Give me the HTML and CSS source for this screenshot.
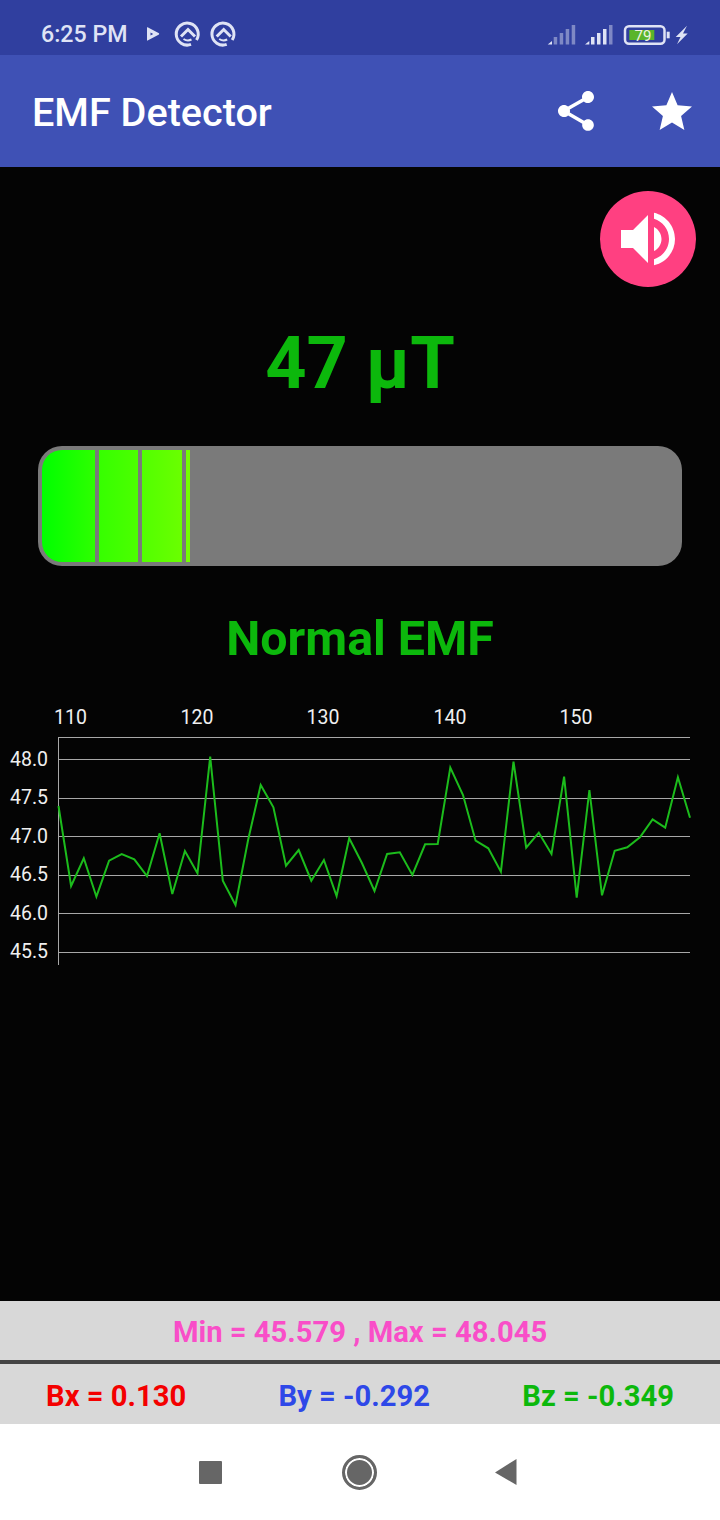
FILE: index.html
```html
<!DOCTYPE html>
<html lang="en">
<head>
  <meta charset="UTF-8">
  <title>EMF Detector</title>
  <meta name="viewport" content="width=device-width, initial-scale=1">
  <link rel="stylesheet" href="styles.css">
</head>
<body>
  <div class="phone">
    <div class="status-bar">
      <span class="time">6:25 PM</span>
      <svg class="status-left" width="100" height="30" viewBox="0 0 100 30">
        <path d="M7 8.5 Q7 8 7.6 8.2 L19 14.2 Q19.4 15 19 15.4 L7.6 21.6 Q7 21.8 7 21 Z M10.5 13.5 L10.5 16.5 L13.2 15 Z" fill="#dfe3f5" fill-rule="evenodd"/>
        <g fill="none" stroke="#dfe3f5" stroke-width="3">
          <path d="M51 25.4 A11 11 0 1 1 56.5 21"/>
          <path d="M41 17.5 L48 10.5 L55 17.5"/>
          <path d="M43.5 20 Q47.5 22.5 51.5 20.5" stroke-width="2"/>
          <path d="M86.7 25.4 A11 11 0 1 1 92.2 21"/>
          <path d="M76.7 17.5 L83.7 10.5 L90.7 17.5"/>
          <path d="M79.2 20 Q83.2 22.5 87.2 20.5" stroke-width="2"/>
        </g>
      </svg>
      <svg class="status-right" width="142" height="30" viewBox="0 0 142 30">
        <g fill="#dfe3f5">
          <path d="M1.7 25.5 L6 22 V25.5 Z"/>
          <g opacity="0.45">
            <rect x="7.7" y="18" width="3.5" height="7.5"/>
            <rect x="13.7" y="14" width="3.5" height="11.5"/>
            <rect x="19.7" y="10" width="3.5" height="15.5"/>
            <rect x="25.7" y="6" width="3.5" height="19.5"/>
          </g>
          <path d="M39 25.5 L43.3 22 V25.5 Z"/>
          <rect x="45" y="18" width="3.5" height="7.5"/>
          <rect x="51" y="14" width="3.5" height="11.5"/>
          <rect x="57" y="10" width="3.5" height="15.5"/>
          <rect x="63" y="6" width="3.5" height="19.5" opacity="0.45"/>
        </g>
        <rect x="83.3" y="11" width="25" height="10" fill="#5ab52a"/>
        <rect x="79" y="7.2" width="39.5" height="17.6" rx="4" fill="none" stroke="#dfe3f5" stroke-width="2.5"/>
        <rect x="120.7" y="12.7" width="3" height="6.6" fill="#dfe3f5"/>
        <text x="97" y="21.5" class="battery-level">79</text>
        <path d="M141 6.7 L129.7 18 H134.5 L131 25.3 L141.7 14.5 H137 Z" fill="#dfe3f5"/>
      </svg>
    </div>

    <header class="toolbar">
      <h1 class="toolbar-title">EMF Detector</h1>
      <svg class="toolbar-icon" viewBox="0 0 24 24"><path d="M18 16.08c-.76 0-1.44.3-1.96.77L8.91 12.7c.05-.23.09-.46.09-.7s-.04-.47-.09-.7l7.05-4.11c.54.5 1.25.81 2.04.81 1.66 0 3-1.34 3-3s-1.34-3-3-3-3 1.34-3 3c0 .24.04.47.09.7L8.04 9.81C7.5 9.31 6.79 9 6 9c-1.66 0-3 1.34-3 3s1.34 3 3 3c.79 0 1.5-.31 2.04-.81l7.12 4.16c-.05.21-.08.43-.08.65 0 1.61 1.31 2.92 2.92 2.92s2.92-1.31 2.92-2.92-1.31-2.92-2.92-2.92z"/></svg>
      <svg class="toolbar-icon star" viewBox="0 0 24 24"><path d="M12 17.27L18.18 21l-1.64-7.03L22 9.24l-7.19-.61L12 2 9.19 8.63 2 9.24l5.46 4.73L5.82 21z"/></svg>
    </header>

    <main class="content">
      <div class="fab-row">
        <button class="fab">
          <svg viewBox="0 0 24 24"><path d="M3 9v6h4l5 5V4L7 9H3zm13.5 3c0-1.77-1.02-3.29-2.5-4.03v8.05c1.48-.73 2.5-2.25 2.5-4.02zM14 3.23v2.06c2.89.86 5 3.54 5 6.71s-2.11 5.85-5 6.71v2.06c4.01-.91 7-4.49 7-8.77s-2.99-7.86-7-8.77z"/></svg>
        </button>
      </div>

      <div class="reading">47 µT</div>

      <div class="meter">
        <div class="seg seg-1"></div>
        <div class="seg seg-2"></div>
        <div class="seg seg-3"></div>
        <div class="seg seg-4"></div>
      </div>

      <div class="level">Normal EMF</div>

      <svg class="chart" width="720" height="270" viewBox="0 700 720 270">
        <g class="grid">
          <line x1="58" y1="737.5" x2="690" y2="737.5"/>
          <line x1="58" y1="759.5" x2="690" y2="759.5"/>
          <line x1="58" y1="798.5" x2="690" y2="798.5"/>
          <line x1="58" y1="836.5" x2="690" y2="836.5"/>
          <line x1="58" y1="875.5" x2="690" y2="875.5"/>
          <line x1="58" y1="913.5" x2="690" y2="913.5"/>
          <line x1="58" y1="952.5" x2="690" y2="952.5"/>
          <line x1="58.5" y1="737" x2="58.5" y2="965"/>
        </g>
        <g class="x-labels">
          <text x="70.5" y="724">110</text>
          <text x="197" y="724">120</text>
          <text x="323" y="724">130</text>
          <text x="450" y="724">140</text>
          <text x="576" y="724">150</text>
        </g>
        <g class="y-labels">
          <text x="10" y="766">48.0</text>
          <text x="10" y="804">47.5</text>
          <text x="10" y="843">47.0</text>
          <text x="10" y="881">46.5</text>
          <text x="10" y="920">46.0</text>
          <text x="10" y="958">45.5</text>
        </g>
        <polyline class="trace" points="58.5,806 71.1,886 83.8,858.3 96.4,896.7 109.1,860.7 121.7,854 134.3,859.3 147,876 159.6,833.3 172.3,894 184.9,851 197.5,873.3 210.2,756.7 222.8,880.7 235.5,905 248.1,840 260.7,785 273.4,807.3 286,865.7 298.7,850 311.3,880.7 323.9,860 336.6,896 349.2,838.3 361.9,863 374.5,891 387.1,854 399.8,852.3 412.4,875 425.1,844.3 437.7,844 450.3,767.7 463,795 475.6,840.7 488.3,848.3 500.9,871.7 513.5,761.7 526.2,847.7 538.8,832.7 551.5,854 564.1,776.7 576.7,897.7 589.4,790 602,895.3 614.7,850.7 627.3,847.3 639.9,837.3 652.6,819.3 665.2,827.7 677.9,777.3 690,817.7"/>
      </svg>
    </main>

    <section class="stats">
      <div class="stat-row minmax">Min = 45.579 , Max = 48.045</div>
      <div class="stat-row axes">
        <span class="bx">Bx = 0.130</span>
        <span class="by">By = -0.292</span>
        <span class="bz">Bz = -0.349</span>
      </div>
    </section>

    <nav class="nav-bar">
      <span class="nav-square"></span>
      <span class="nav-circle"></span>
      <svg class="nav-back" width="24" height="28" viewBox="0 0 24 28"><path d="M22.5 1 V27 L1 14.5 Z"/></svg>
    </nav>
  </div>
</body>
</html>
```

FILE: styles.css
```css
* {
  box-sizing: border-box;
}

body {
  margin: 0;
  font-family: Roboto, "Liberation Sans", sans-serif;
  background: #040404;
}

.phone {
  width: 720px;
  height: 1520px;
  display: flex;
  flex-direction: column;
  overflow: hidden;
}

/* status bar */
.status-bar {
  height: 55px;
  background: #303f9f;
  display: flex;
  align-items: center;
  padding: 13px 0 0 41px;
  color: #dfe3f5;
}

.time {
  font-size: 23.2px;
  font-weight: 500;
}

.status-left {
  margin-left: 12px;
}

.status-right {
  margin-left: auto;
  margin-right: 32px;
}

.battery-level {
  font-size: 15px;
  fill: #eef3e0;
  text-anchor: middle;
}

/* toolbar */
.toolbar {
  height: 112px;
  background: #3f51b5;
  display: flex;
  align-items: center;
  padding: 0 24px 0 32px;
  gap: 48px;
}

.toolbar-title {
  margin: 3px auto 0 0;
  font-size: 39.6px;
  font-weight: 500;
  color: white;
}

.toolbar-icon {
  width: 48px;
  height: 48px;
  fill: white;
}

.star {
  margin-top: 2px;
}

/* main */
.content {
  flex: 1;
  padding-top: 24px;
  background: #040404;
}

.fab-row {
  display: flex;
  justify-content: flex-end;
  padding-right: 24px;
}

.fab {
  width: 96px;
  height: 96px;
  border: none;
  border-radius: 50%;
  background: #ff4081;
  padding: 12px;
}

.fab svg {
  display: block;
  width: 72px;
  height: 72px;
  fill: white;
}

.reading {
  margin-top: 36px;
  line-height: 82px;
  font-size: 72px;
  font-weight: 700;
  text-align: center;
  color: #0cb80c;
}

.meter {
  margin: 41px 38px 0;
  height: 120px;
  padding: 4px;
  display: flex;
  gap: 4px;
  background: #7a7a7a;
  border-radius: 24px;
}

.seg {
  height: 100%;
}

.seg-1 {
  width: 53px;
  border-radius: 20px 0 0 20px;
  background: linear-gradient(to right, #00ff00, #2eff00);
}

.seg-2 {
  width: 39px;
  background: linear-gradient(to right, #36ff00, #4cff00);
}

.seg-3 {
  width: 40px;
  background: linear-gradient(to right, #52ff00, #6aff00);
}

.seg-4 {
  width: 4px;
  background: #74ff00;
}

.level {
  margin-top: 45px;
  line-height: 56px;
  font-size: 48.3px;
  font-weight: 700;
  text-align: center;
  color: #0cb80c;
}

.chart {
  display: block;
  margin-top: 33px;
}

.grid line {
  stroke: #a8a8a8;
  stroke-width: 1;
}

.x-labels text,
.y-labels text {
  font-size: 19.5px;
  fill: #f0f0f0;
}

.x-labels text {
  text-anchor: middle;
}

.trace {
  fill: none;
  stroke: #1cbc1c;
  stroke-width: 2;
}

/* bottom stats */
.stats {
  background: #d8d8d8;
}

.stat-row {
  height: 59px;
  display: flex;
  align-items: center;
  font-size: 29.2px;
  font-weight: 700;
}

.minmax {
  justify-content: center;
  padding-top: 2px;
  color: #f94ec8;
}

.axes {
  height: 64px;
  padding: 4px 46px 0;
  border-top: 4px solid #444;
  justify-content: space-between;
}

.bx {
  color: #f40000;
}

.by {
  color: #2e48e8;
}

.bz {
  color: #0cb80c;
}

/* nav */
.nav-bar {
  height: 96px;
  background: white;
  display: flex;
  align-items: center;
  justify-content: center;
  gap: 120px;
  padding-right: 3px;
}

.nav-square {
  width: 23px;
  height: 23px;
  background: #666;
  border-radius: 1px;
}

.nav-circle {
  width: 35px;
  height: 35px;
  border-radius: 50%;
  background: #666;
  border: 3px solid #666;
  box-shadow: inset 0 0 0 2px white;
}

.nav-back {
  fill: #666;
  margin-left: -3px;
}
```
